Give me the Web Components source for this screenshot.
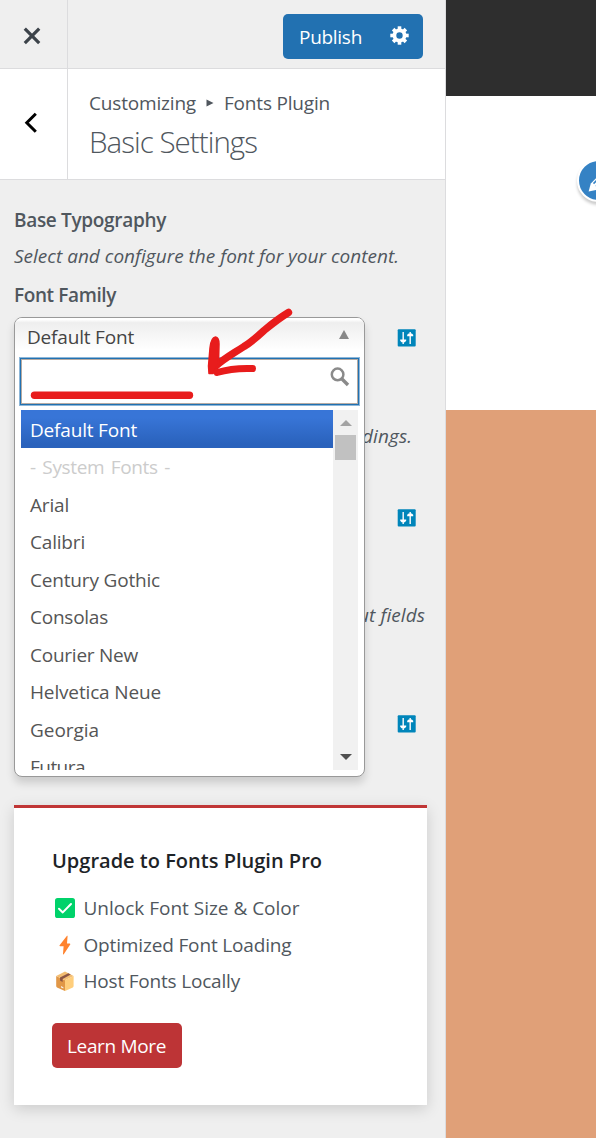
<!DOCTYPE html>
<html lang="en">
<head>
<meta charset="utf-8">
<title>Customizer</title>
<style>
html,body{margin:0;height:1138px;overflow:hidden}
body{font:19px/26px "Open Sans","Noto Sans",sans-serif;font-stretch:94%;color:#50575e}
</style>
</head>
<body>
<customizer-app></customizer-app>
<script>
const define = (name, html, setup, prepare) => {
  const tpl = document.createElement('template');
  tpl.innerHTML = html;
  customElements.define(name, class extends HTMLElement {
    connectedCallback() {
      if (this.shadowRoot) return;
      const content = tpl.content.cloneNode(true);
      if (prepare) prepare(this, content);
      this.attachShadow({mode: 'open'}).append(content);
      if (setup) setup(this, this.shadowRoot);
    }
  });
};

/* Single line of text tracked to an exact width. */
define('fit-text', `<style>:host{display:block;white-space:nowrap;width:max-content}</style><slot></slot>`, (el, root) => {
  const w = +el.getAttribute('w');
  if (!w) return;
  const apply = () => {
    const text = root.querySelector('slot').assignedNodes({flatten: true}).map(n => n.textContent).join('');
    if (!text) return;
    el.style.letterSpacing = '0px';
    const natural = el.getBoundingClientRect().width;
    el.style.letterSpacing = ((w - natural) / text.length) + 'px';
  };
  apply();
  document.fonts.ready.then(apply);
});

define('publish-button', `
<style>
:host{display:flex;width:140px;height:45px;border-radius:5px;background:#2271b1;color:#fff;align-items:center;box-sizing:border-box;padding-left:16px}
svg{margin:0 0 2px 28px}
</style>
<fit-text w="63"><slot></slot></fit-text>
<svg width="19" height="19" viewBox="0 0 19 19"><g fill="#fff" transform="translate(9.5 9.5)"><path fill-rule="evenodd" d="M0-6.9A6.9 6.9 0 1 1 0 6.9A6.9 6.9 0 1 1 0-6.9ZM0-3.2A3.2 3.2 0 1 0 0 3.2A3.2 3.2 0 1 0 0-3.2Z"/>
<g><rect x="-1.8" y="-9.2" width="3.6" height="4"/><rect x="-1.8" y="5.2" width="3.6" height="4"/><rect x="-9.2" y="-1.8" width="4" height="3.6"/><rect x="5.2" y="-1.8" width="4" height="3.6"/></g>
<g transform="rotate(45)"><rect x="-1.8" y="-9" width="3.6" height="4"/><rect x="-1.8" y="5" width="3.6" height="4"/><rect x="-9" y="-1.8" width="4" height="3.6"/><rect x="5" y="-1.8" width="4" height="3.6"/></g></g></svg>`);

define('panel-actions', `
<style>
:host{display:flex;height:68px;border-bottom:1px solid #dcdcde;justify-content:space-between}
.close{width:67px;border-right:1px solid #dcdcde;display:flex;align-items:center;box-sizing:content-box}
svg{margin:3px 0 0 23px}
publish-button{margin:14px 22px 0 0}
</style>
<div class="close"><svg width="18" height="18" viewBox="0 0 18 18" stroke="#3c434a" stroke-width="3.2"><path d="M1.8 1.6 16.2 16.2M16.2 1.6 1.8 16.2"/></svg></div>
<publish-button>Publish</publish-button>`);

define('panel-title', `
<style>
:host{display:flex;height:110px;background:#fff;border-bottom:1px solid #dcdcde}
.back{width:67px;border-right:1px solid #dcdcde;display:flex;align-items:center}
.back svg{margin:0 0 2px 23px}
.t{padding:21px 0 0 21px}
.crumb{display:flex;align-items:center;height:26px}
.crumb svg{margin:0 10px 0 10px}
h1{margin:6px 0 0;font-size:29.5px;font-weight:300;line-height:40px}
</style>
<div class="back"><svg width="16" height="22" viewBox="0 0 16 22" fill="none" stroke="#000" stroke-width="3"><path d="M12.8 1.8 3.8 10.8 12.8 19.8"/></svg></div>
<div class="t"><div class="crumb"><fit-text w="107">Customizing</fit-text><svg width="8" height="8" viewBox="0 0 8 8"><path d="M.5 .5 7.5 4 .5 7.5Z" fill="#50575e"/></svg><fit-text w="106">Fonts Plugin</fit-text></div>
<h1><fit-text w="168">Basic Settings</fit-text></h1></div>`);

define('settings-toggle', `
<style>:host{display:block;width:19px;height:18px}svg{display:block}</style>
<svg width="19" height="18" viewBox="0 0 19 18"><rect x=".7" y=".3" width="18" height="17.2" rx="1" fill="#0085ba"/><path d="M6.200 3v12M13.200 3v12" stroke="#eef3f6" stroke-width="1.5"/><path d="M3.200 10.4h6v1.400l-1.400 1.400H4.600L3.200 11.800ZM10.200 7.200h6V5.800l-1.400-1.400h-3.200L10.200 5.800Z" fill="#fff"/></svg>`);

define('control-row', `
<style>
:host{display:flex;align-items:flex-start;justify-content:flex-end;padding-right:29px;box-sizing:border-box}
</style><settings-toggle></settings-toggle>`);

define('font-option', `
<style>
:host{display:flex;height:37.5px;align-items:center;padding-left:9px;color:#555;flex:none}
:host([active]){background:linear-gradient(#3875d7 20%,#2a62bc 90%);color:#fff}
:host([muted]){color:#ccc;word-spacing:2px}
fit-text{margin-top:2px}
</style><fit-text><slot></slot></fit-text>`, null, (el, content) => content.querySelector('fit-text').setAttribute('w', el.getAttribute('w')));

define('scroll-bar', `
<style>
:host{display:flex;flex-direction:column;width:25px;background:#f1f1f1;align-items:center}
i{width:21px;height:25px;background:#c1c1c1}
.a{height:25px;display:flex;align-items:center}
.b{margin-top:auto}
svg{display:block}
</style>
<div class="a"><svg width="12" height="6"><path d="M0 6 6 0 12 6Z" fill="#a3a3a3"/></svg></div><i></i>
<div class="a b"><svg width="12" height="6" style="margin-bottom:2px"><path d="M0 0 6 6 12 0Z" fill="#505050"/></svg></div>`);

define('font-select', `
<style>
:host{display:flex;flex-direction:column;box-sizing:border-box;width:351px;height:460px;border:1px solid #999;border-radius:8px;background:#fff;box-shadow:0 6px 8px rgba(0,0,0,.15)}
.head{display:flex;height:39px;box-sizing:border-box;padding:0 15px 2px 12px;align-items:center;justify-content:space-between;border-radius:7px 7px 0 0;background:linear-gradient(#fff 4%,#eee 12%,#fff 82%);color:#444}
.head svg{margin-bottom:3px}
.search{margin:0 4px;height:49px;box-sizing:border-box;border:1px solid #8db7d9;box-shadow:inset 0 0 0 1px #2271b1,inset 0 0 0 2px #b5aaa2;display:flex;justify-content:flex-end;padding:9px 9px 0 0}
.body{display:flex;height:360px;margin:4px 6px 0 6px}
.list{flex:1;display:flex;flex-direction:column;overflow:hidden}
</style>
<div class="head"><fit-text w="107">Default Font</fit-text><svg width="10" height="10"><path d="M0 9 5 0 10 9Z" fill="#888"/></svg></div>
<div class="search"><svg width="20" height="20" viewBox="0 0 20 20" fill="none" stroke="#8a8a8a"><circle cx="7.6" cy="7.4" r="5.8" stroke-width="2.5"/><path d="M12 12 18 18" stroke-width="3.4"/></svg></div>
<div class="body"><div class="list">
<font-option active w="107">Default Font</font-option>
<font-option muted w="140">- System Fonts -</font-option>
<font-option w="39">Arial</font-option>
<font-option w="55">Calibri</font-option>
<font-option w="130">Century Gothic</font-option>
<font-option w="78">Consolas</font-option>
<font-option w="108">Courier New</font-option>
<font-option w="131">Helvetica Neue</font-option>
<font-option w="69">Georgia</font-option>
<font-option w="55">Futura</font-option>
</div><scroll-bar></scroll-bar></div>`);

define('upgrade-card', `
<style>
:host{display:flex;flex-direction:column;box-sizing:border-box;width:413px;height:300px;background:#fff;border-top:3px solid #c03636;box-shadow:0 4px 14px rgba(0,0,0,.15);padding:39px 38px 0}
h2{margin:0;font-size:20px;font-weight:600;line-height:28px;color:#1d2327}
ul{list-style:none;margin:15px 0 0;padding:0}
li{display:flex;height:36.6px;align-items:center}
li svg{margin:0 8.5px 0 3px;width:20px;height:20px}
.btn{margin-top:23px;width:130px;height:45px;border-radius:5px;background:#bd3436;color:#fff;display:flex;align-items:center;box-sizing:border-box;padding:2px 0 0 15px}
</style>
<h2><fit-text w="270">Upgrade to Fonts Plugin Pro</fit-text></h2>
<ul>
<li><svg viewBox="0 0 20 20"><rect width="20" height="20" rx="2.6" fill="#00d26a"/><path d="M4 10.8 7.8 14.4 16 6" fill="none" stroke="#fff" stroke-width="2" stroke-linecap="round" stroke-linejoin="round"/></svg><fit-text w="216">Unlock Font Size &amp; Color</fit-text></li>
<li><svg viewBox="0 0 20 20"><path d="M12 .8 4.6 10.2a.6.6 0 0 0 .5 1H8.6L8 19c0 .5.5.6.8.2L15.2 9.6a.6.6 0 0 0-.5-1H12L12.6 1.1C12.6 .7 12.200 .5 12 .8Z" fill="#ff822d"/></svg><fit-text w="208">Optimized Font Loading</fit-text></li>
<li><svg viewBox="0 0 20 20"><path d="M1.200 5 10 9.200V20L2 16.400Q1.200 16 1.200 15Z" fill="#e19747"/><path d="M18.600 5 10 9.200V20L17.800 16.400Q18.600 16 18.600 15Z" fill="#ffce7c"/><path d="M10 .4 18.600 5 10 9.200 1.200 5Z" fill="#f3bd72"/><path d="M5 6.600 13.400 2.200 15.800 3.400 7.600 8V11L5 9.600Z" fill="#8c5543"/><path d="M6 15 8.400 16.200V17.600L6 16.400Z" fill="#f4eee5"/></svg><fit-text w="156.500">Host Fonts Locally</fit-text></li>
</ul>
<div class="btn"><fit-text w="99">Learn More</fit-text></div>`);

define('site-preview', `
<style>
:host{display:flex;flex-direction:column;position:relative;overflow:hidden;flex:1}
.dark{height:96px;background:#2e2e2e}
.white{height:314px;background:#fff}
.rest{flex:1;background:#e0a078}
.edit{position:absolute;left:130.5px;top:159px;width:39px;height:39px;border-radius:50%;background:#3582c4;border:2px solid #fff;box-shadow:0 3px 3px rgba(0,0,0,.2)}
.edit svg{display:block}
</style>
<div class="dark"></div><div class="white"></div><div class="rest"></div>
<div class="edit"><svg width="39" height="39" viewBox="0 0 39 39"><path d="M9.600 30.600 11.800 22.400 23 11.200 29.200 17.400 17.800 28.800Z" fill="#fff"/><path d="M14.500 22.600 22 15M17 25.400 25 17.600" stroke="#3582c4" stroke-width="1.500"/></svg></div>`);

define('customizer-app', `
<style>
:host{display:flex;width:596px;height:1138px}
aside{width:445px;border-right:1px solid #dcdcde;background:#efefef;display:flex;flex-direction:column;flex:none}
main{flex:1;position:relative;padding-left:14px}
h3{margin:0;font-size:19px;font-weight:600;line-height:26px}
.desc{font-style:italic}
.end{display:flex;justify-content:flex-end;padding-right:33px}
.end.wide{padding-right:20px}
font-select{position:absolute;left:14px;top:137px}
.mark{position:absolute;left:0;top:120px;pointer-events:none}
</style>
<aside>
<panel-actions></panel-actions>
<panel-title></panel-title>
<main>
<h3 style="padding-top:27px"><fit-text w="152">Base Typography</fit-text></h3>
<fit-text class="desc" w="385" style="margin-top:10px">Select and configure the font for your content.</fit-text>
<h3 style="margin-top:13px"><fit-text w="102">Font Family</fit-text></h3>
<control-row style="margin-top:21px;height:94px"></control-row>
<div class="end desc" style="height:86px"><fit-text w="50">dings.</fit-text></div>
<control-row style="height:93px"></control-row>
<div class="end wide desc" style="height:113px"><fit-text w="67">ut fields</fit-text></div>
<control-row style="height:90px"></control-row>
<upgrade-card></upgrade-card>
<font-select></font-select>
<svg class="mark" width="310" height="120" viewBox="0 300 310 120" fill="none" stroke="#e81c1c" stroke-linecap="round" stroke-linejoin="round"><path d="M34.500 395.300H189.500" stroke-width="7.400"/><path d="M288.500 312.500C281 317 270 325.500 264 330.500 257 337 250 343 244 346.500 231 355 222 360 216 366" stroke-width="7.400"/><path d="M215.500 337Q219 337.500 219 344L218.500 364 213 373.500 209 373.500 208.500 366 210 348Q211 337.500 215.500 337Z" fill="#e81c1c" stroke-width="1.500"/><path d="M217 372.500C227 369.500 240 368 252.500 368.500" stroke-width="7"/></svg>
</main>
</aside>
<site-preview></site-preview>`);
</script>
</body>
</html>
